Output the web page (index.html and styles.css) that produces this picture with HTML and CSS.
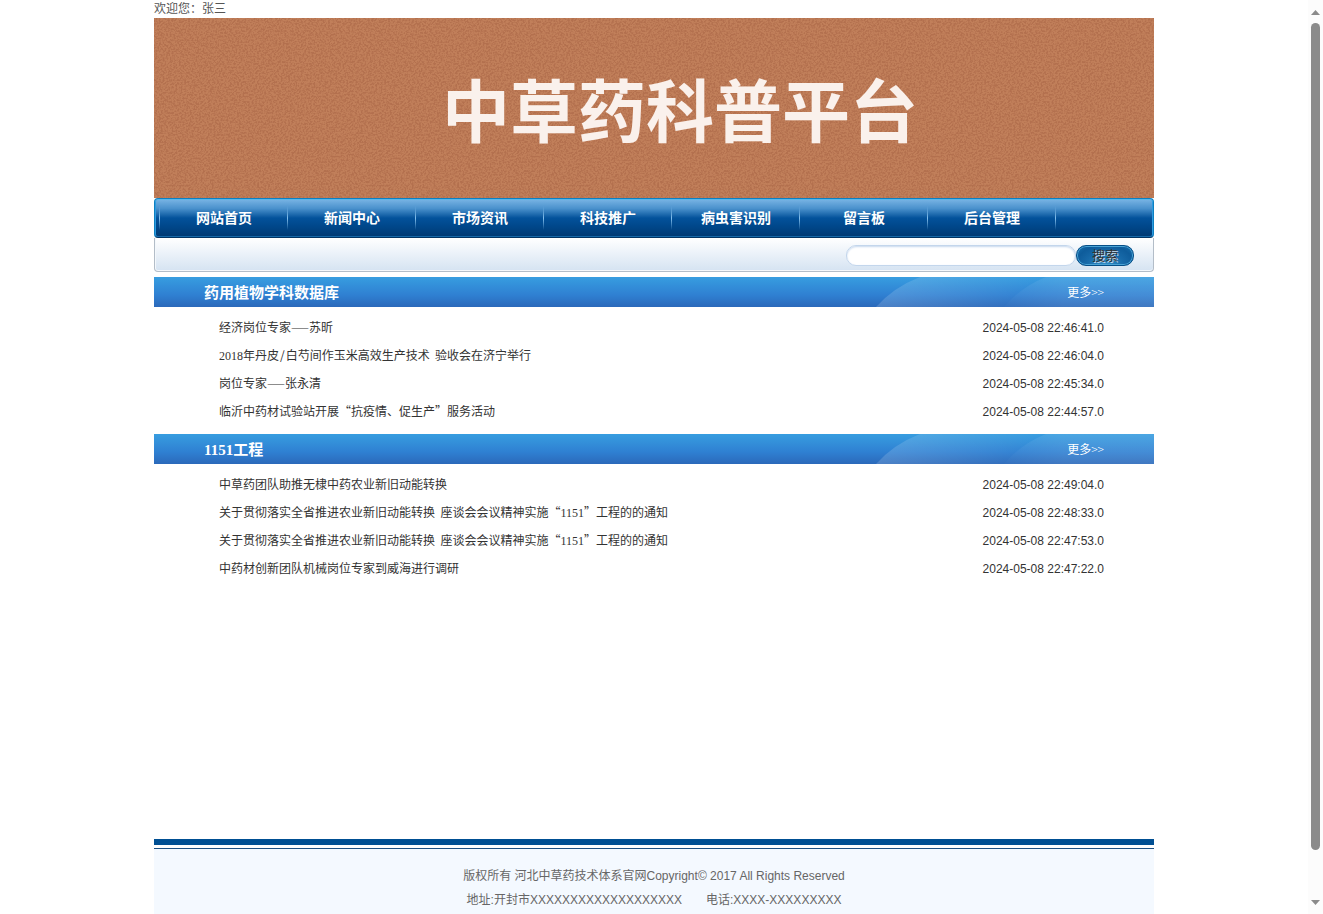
FILE: index.html
```html
<!DOCTYPE html>
<html lang="zh-CN">
<head>
    <meta charset="UTF-8">
    <title>中草药科普平台</title>
    <link rel="stylesheet" href="styles.css">
</head>
<body>
    <div class="page">
        <div class="wrap">
            <div class="welcome">欢迎您：张三</div>
            <h1 class="banner">中草药科普平台</h1>
            <nav class="menu">
                <a href="#">网站首页</a>
                <a href="#">新闻中心</a>
                <a href="#">市场资讯</a>
                <a href="#">科技推广</a>
                <a href="#">病虫害识别</a>
                <a href="#">留言板</a>
                <a href="#">后台管理</a>
            </nav>
            <form class="search">
                <input type="text" class="search-text" name="keyword" aria-label="搜索">
                <button type="submit" class="search-btn">搜索</button>
            </form>

            <div class="content">
                <div class="bar">
                    <h2>药用植物学科数据库</h2>
                    <a href="#">更多<span class="more">&gt;&gt;</span></a>
                </div>
                <ul class="list">
                    <li><a href="#">经济岗位专家<span class="dash">——</span>苏昕</a><span class="date">2024-05-08 22:46:41.0</span></li>
                    <li><a href="#"><span class="num">2018</span>年丹皮<span class="slash">/</span>白芍间作玉米高效生产技术&nbsp; 验收会在济宁举行</a><span class="date">2024-05-08 22:46:04.0</span></li>
                    <li><a href="#">岗位专家<span class="dash">——</span>张永清</a><span class="date">2024-05-08 22:45:34.0</span></li>
                    <li><a href="#">临沂中药材试验站开展“抗疫情、促生产”服务活动</a><span class="date">2024-05-08 22:44:57.0</span></li>
                </ul>
                <div class="bar">
                    <h2><span class="num">1151</span>工程</h2>
                    <a href="#">更多<span class="more">&gt;&gt;</span></a>
                </div>
                <ul class="list">
                    <li><a href="#">中草药团队助推无棣中药农业新旧动能转换</a><span class="date">2024-05-08 22:49:04.0</span></li>
                    <li><a href="#">关于贯彻落实全省推进农业新旧动能转换&nbsp; 座谈会会议精神实施“<span class="num">1151</span>”工程的的通知</a><span class="date">2024-05-08 22:48:33.0</span></li>
                    <li><a href="#">关于贯彻落实全省推进农业新旧动能转换&nbsp; 座谈会会议精神实施“<span class="num">1151</span>”工程的的通知</a><span class="date">2024-05-08 22:47:53.0</span></li>
                    <li><a href="#">中药材创新团队机械岗位专家到威海进行调研</a><span class="date">2024-05-08 22:47:22.0</span></li>
                </ul>
            </div>

            <footer class="footer">
                <p>版权所有 河北中草药技术体系官网Copyright© 2017 All Rights Reserved</p>
                <p><span>地址:开封市XXXXXXXXXXXXXXXXXXX</span><span>电话:XXXX-XXXXXXXXX</span></p>
            </footer>
        </div>
    </div>
    <div class="scrollbar" aria-hidden="true">
        <svg width="9" height="5" viewBox="0 0 9 5"><path d="M0 5L4.500 0L9 5Z" fill="#8b8b8b"/></svg>
        <div class="thumb-track"><div class="thumb"></div></div>
        <svg width="9" height="5" viewBox="0 0 9 5"><path d="M0 0L4.500 5L9 0Z" fill="#8b8b8b"/></svg>
    </div>
</body>
</html>
```
FILE: styles.css
```css
* {
    box-sizing: border-box;
}
body {
    display: flex;
    height: 100vh;
    margin: 0;
    overflow: hidden;
    background: #fff;
    color: #666;
    font: 12px/18px "Liberation Sans", "Noto Sans CJK SC", sans-serif;
}
a {
    color: inherit;
    text-decoration: none;
}
h1, h2, p, ul {
    margin: 0;
    padding: 0;
}
.page {
    flex: 1;
    min-width: 0;
    overflow: hidden;
}
.wrap {
    max-width: 1000px;
    margin: 0 auto;
}
.welcome {
    height: 18px;
    color: #555;
}

/* banner with a grainy clay texture */
.banner {
    height: 180px;
    padding-left: 52px;
    background: #c17f5a url("data:image/svg+xml,%3Csvg xmlns='http://www.w3.org/2000/svg' width='200' height='180'%3E%3Cfilter id='n' x='0' y='0' width='100%25' height='100%25' color-interpolation-filters='sRGB'%3E%3CfeTurbulence type='fractalNoise' baseFrequency='.55' numOctaves='2' stitchTiles='stitch'/%3E%3CfeColorMatrix values='0 0 0 0 .56 0 0 0 0 .28 0 0 0 0 .18 4 0 0 0 -1.600'/%3E%3C/filter%3E%3Crect width='200' height='180' filter='url(%23n)' opacity='.28'/%3E%3C/svg%3E");
    color: #faf1ec;
    font: bold 68px/180px "Noto Sans CJK SC", sans-serif;
    text-align: center;
}

.menu {
    display: flex;
    height: 40px;
    padding-left: 4px;
    border: 1px solid #0d7fc0;
    border-bottom-color: #003463;
    border-radius: 4px;
    background: linear-gradient(#7ab5e5 0, #4a91cc 25%, #03529b 50%, #00488c 70%, #003a72 100%);
    box-shadow: inset 0 1px #58b8ec, inset 1px 0 #2e9be0, inset -1px 0 #2e9be0, inset 0 -1px #1769a8;
}
.menu::before {
    content: "";
    width: 1px;
}
.menu a {
    width: 128px;
    color: #fff;
    font: bold 14px/36px "Noto Sans CJK SC", sans-serif;
    text-align: center;
}
.menu::before, .menu a {
    background: linear-gradient(transparent, #86c1ee 50%, transparent) right 7px / 1px 24px no-repeat;
}

.search {
    display: flex;
    align-items: center;
    justify-content: flex-end;
    height: 34px;
    padding: 1px 19px 0 0;
    border: 1px solid #b3bdc8;
    border-top: 0;
    border-radius: 0 0 4px 4px;
    background: linear-gradient(#fff, #d5e3f2);
    box-shadow: inset 0 -1px #f4f8fc, inset 1px 0 #f4f8fc;
}
.search-text {
    width: 230px;
    height: 21px;
    padding: 0 10px;
    border: 1px solid #c3d6ec;
    border-radius: 10px;
    background: #fff;
    box-shadow: inset 0 1px 2px #c6d8ee;
    outline: 0;
}
.search-btn {
    width: 58px;
    height: 21px;
    padding: 0;
    border: 1px solid #064f88;
    border-radius: 10px;
    background: radial-gradient(ellipse at 50% 110%, #3391c9, #1769a8 50%, #0e5c9b 75%, #1872b0);
    box-shadow: inset 0 0 0 1px #4aa3d5;
    color: #333;
    font: 13px/18px "Noto Sans CJK SC", sans-serif;
    text-shadow: 1px 1px #c9dced;
}

.content {
    min-height: 567px;
    padding-top: 5px;
}
.bar {
    display: flex;
    align-items: center;
    justify-content: space-between;
    height: 30px;
    padding: 0 50px;
    background: url("data:image/svg+xml,%3Csvg xmlns='http://www.w3.org/2000/svg' width='278' height='30'%3E%3Cdefs%3E%3ClinearGradient id='a'%3E%3Cstop stop-color='%23fff' stop-opacity='.16'/%3E%3Cstop offset='1' stop-color='%23fff' stop-opacity='0'/%3E%3C/linearGradient%3E%3ClinearGradient id='b'%3E%3Cstop stop-color='%23fff' stop-opacity='.05'/%3E%3Cstop offset='.4' stop-color='%23fff' stop-opacity='.1'/%3E%3C/linearGradient%3E%3C/defs%3E%3Cpath d='M0 30Q18 10 44 0H170Q145 10 128 30Z' fill='url(%23a)'/%3E%3Cpath d='M128 30Q145 10 170 0H278V30Z' fill='url(%23b)'/%3E%3C/svg%3E") right top no-repeat, linear-gradient(#379de0, #2f80d2 60%, #2b69ba);
    color: #fff;
}
.bar h2 {
    font: bold 15px/30px "Noto Sans CJK SC", sans-serif;
}
.list {
    padding: 6px 50px 9px 65px;
    list-style: none;
}
.list li {
    display: flex;
    justify-content: space-between;
    height: 28px;
    color: #333;
    line-height: 28px;
}
.bar a, .list a {
    font-family: "Noto Sans CJK SC", sans-serif;
}
.bar .num, .list .num {
    font-family: "Liberation Serif", serif;
}
.more {
    font-weight: 300;
}
.dash {
    font-size: 9px;
    font-weight: bold;
}
.slash {
    padding: 0 1px;
}
.date {
    line-height: 30px;
}

.footer {
    padding: 14px 0;
    border-top: 6px solid #004f93;
    background: linear-gradient(#fff 3px, #1c4f82 3px, #1c4f82 4px, #f4f9ff 4px);
    text-align: center;
}
.footer p {
    display: flex;
    justify-content: center;
    gap: 24px;
    padding-top: 6px;
}
.footer p:first-child {
    padding-top: 8px;
}

/* scroll bar on the right edge */
.scrollbar {
    display: flex;
    flex-direction: column;
    align-items: center;
    width: 15px;
    padding: 10px 0 9px;
    background: #fcfcfc;
}
.thumb-track {
    flex: 1;
    padding: 8px 0 6px;
}
.thumb {
    width: 9px;
    height: 95%;
    border-radius: 5px;
    background: #8b8b8b;
}
```
